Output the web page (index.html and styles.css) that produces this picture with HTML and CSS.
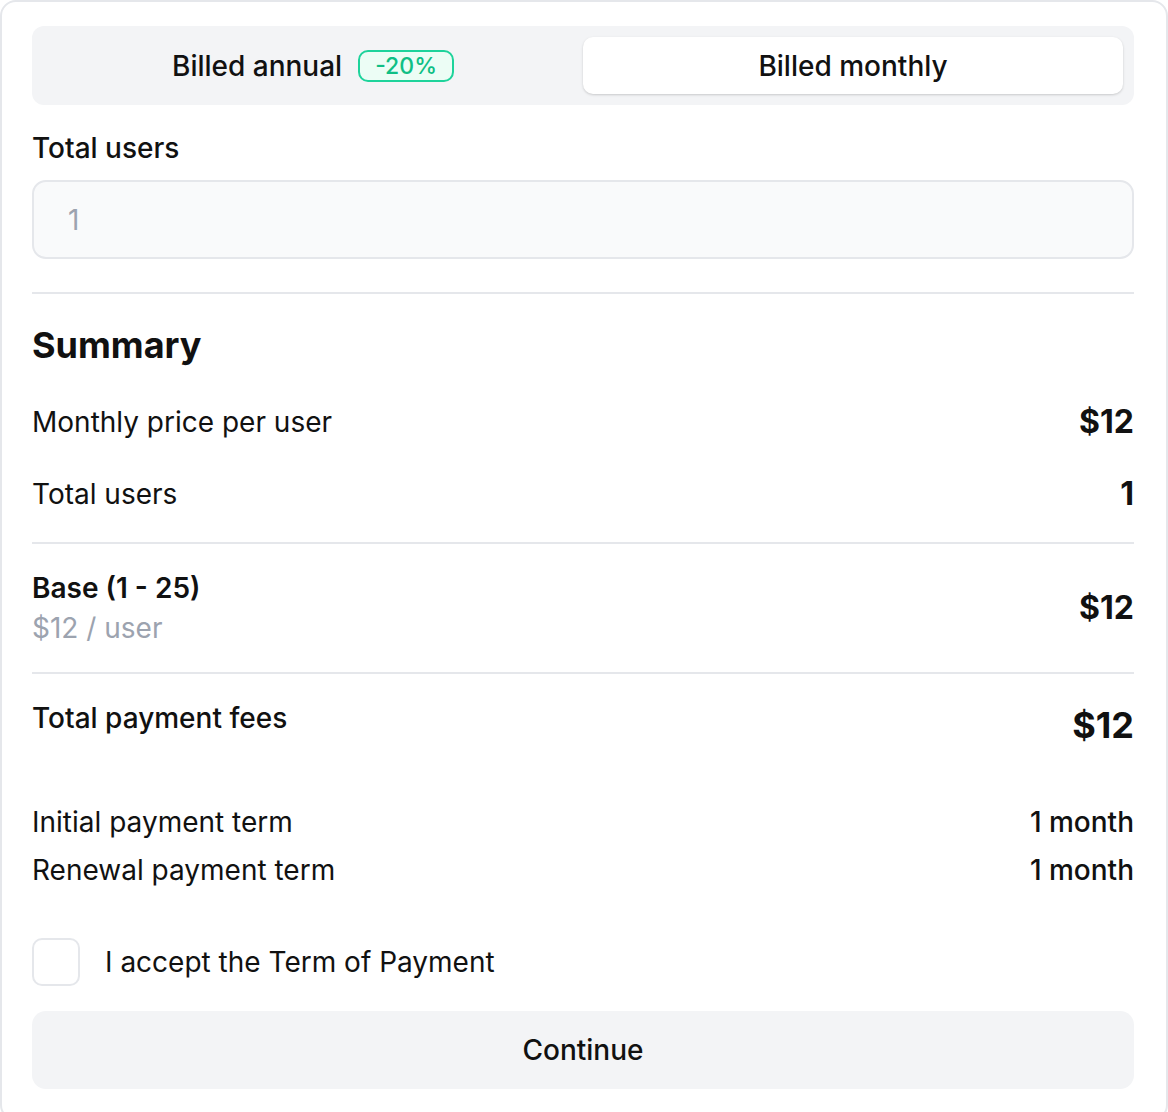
FILE: index.html
```html
<!DOCTYPE html>
<html lang="en">
<head>
<meta charset="utf-8">
<title>Billing</title>
<link rel="stylesheet" href="styles.css">
</head>
<body>
<div class="card">
  <div class="segmented">
    <div class="seg">
      <span>Billed annual</span>
      <span class="badge">-20%</span>
    </div>
    <div class="seg seg-active">
      <span>Billed monthly</span>
    </div>
  </div>

  <div class="field-label">Total users</div>
  <div class="input">1</div>

  <div class="divider d1"></div>

  <h2 class="summary">Summary</h2>

  <div class="row r1">
    <span>Monthly price per user</span>
    <span class="val">$12</span>
  </div>
  <div class="row r2">
    <span>Total users</span>
    <span class="val">1</span>
  </div>

  <div class="divider d2"></div>

  <div class="row tier">
    <div class="tier-text">
      <div class="tier-name">Base (1 - 25)</div>
      <div class="tier-sub">$12 / user</div>
    </div>
    <span class="val">$12</span>
  </div>

  <div class="divider d3"></div>

  <div class="row total">
    <span class="total-label">Total payment fees</span>
    <span class="total-val">$12</span>
  </div>

  <div class="terms">
    <div class="term"><span>Initial payment term</span><span class="term-val">1 month</span></div>
    <div class="term"><span>Renewal payment term</span><span class="term-val">1 month</span></div>
  </div>

  <label class="accept">
    <span class="checkbox"></span>
    <span>I accept the Term of Payment</span>
  </label>

  <button class="continue">Continue</button>
</div>
</body>
</html>
```

FILE: styles.css
```css
* { box-sizing: border-box; }
html, body { margin: 0; padding: 0; background: #ffffff; }
body {
  font-family: Inter, "Noto Sans", "Liberation Sans", sans-serif;
  color: #111111;
  font-size: 28px;
}
.card {
  width: 1168px;
  border: 2px solid #e5e7eb;
  border-radius: 16px;
  padding: 24px 32px 30px 30px;
  display: flex;
  flex-direction: column;
}
.segmented {
  height: 79px;
  background: #f3f4f6;
  border-radius: 12px;
  padding: 11px;
  display: flex;
}
.seg {
  flex: 1;
  display: flex;
  align-items: center;
  justify-content: center;
  gap: 16px;
  font-weight: 500;
  font-size: 28px;
  border-radius: 10px;
}
.seg-active {
  background: #ffffff;
  box-shadow: 0 1px 3px rgba(0,0,0,0.12), 0 1px 2px rgba(0,0,0,0.06);
}
.badge {
  height: 32px;
  padding: 0 15px;
  border: 2px solid #1ed39b;
  background: #ecfdf5;
  color: #0fbf85;
  border-radius: 10px;
  font-size: 23px;
  font-weight: 500;
  display: flex;
  align-items: center;
}
.field-label {
  margin-top: 23px;
  line-height: 40px;
  font-weight: 500;
}
.input {
  margin-top: 12px;
  height: 79px;
  border: 2px solid #e5e7eb;
  background: #f9fafb;
  border-radius: 14px;
  padding: 0 34px;
  display: flex;
  align-items: center;
  color: #9ca3af;
}
.divider {
  height: 2px;
  background: #e5e7eb;
}
.d1 { margin-top: 33px; }
.summary {
  margin: 27px 0 0 0;
  font-size: 36px;
  line-height: 48px;
  font-weight: 700;
}
.row {
  display: flex;
  justify-content: space-between;
  align-items: center;
  line-height: 40px;
}
.r1 { margin-top: 33px; }
.r2 { margin-top: 32px; }
.val {
  font-size: 32px;
  font-weight: 700;
}
.d2 { margin-top: 28px; }
.tier { margin-top: 24px; }
.tier-name { font-weight: 600; }
.tier-sub { color: #9ca3af; }
.d3 { margin-top: 24px; }
.total {
  margin-top: 24px;
  align-items: flex-start;
}
.total-label { font-weight: 500; }
.total-val {
  font-size: 36px;
  font-weight: 700;
  line-height: 54px;
}
.terms {
  margin-top: 50px;
  display: flex;
  flex-direction: column;
  gap: 8px;
}
.term {
  display: flex;
  justify-content: space-between;
  line-height: 40px;
}
.term-val { font-weight: 500; }
.accept {
  margin-top: 48px;
  display: flex;
  align-items: center;
  gap: 25px;
  line-height: 40px;
}
.checkbox {
  width: 48px;
  height: 48px;
  border: 2px solid #e5e7eb;
  border-radius: 10px;
  background: #ffffff;
}
.continue {
  margin-top: 25px;
  height: 78px;
  border: none;
  border-radius: 14px;
  background: #f3f4f6;
  font-family: inherit;
  font-size: 28px;
  font-weight: 500;
  color: #111111;
}
```
